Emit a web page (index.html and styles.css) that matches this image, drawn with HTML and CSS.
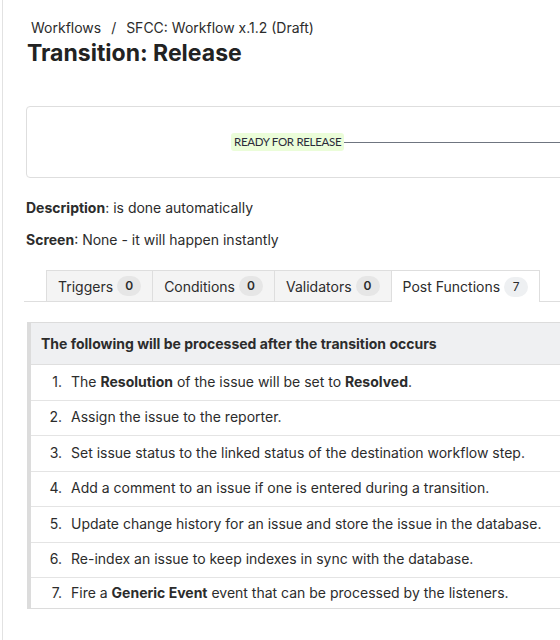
FILE: index.html
```html
<!DOCTYPE html>
<html lang="en">
<head>
  <meta charset="UTF-8">
  <meta name="viewport" content="width=device-width, initial-scale=1.0">
  <title>Transition: Release</title>
  <link rel="stylesheet" href="styles.css">
</head>
<body>
  <div class="page">
    <div class="breadcrumb">
      <a href="#">Workflows</a>
      <span class="sep">/</span>
      <a href="#">SFCC: Workflow x.1.2 (Draft)</a>
    </div>
    <h1>Transition: Release</h1>

    <div class="diagram">
      <span class="status">READY FOR RELEASE</span>
      <span class="arrow"></span>
    </div>

    <p class="meta"><b>Description</b>: is done automatically</p>
    <p class="meta"><b>Screen</b>: None - it will happen instantly</p>

    <div class="tabs">
      <div class="tab">Triggers <span class="count">0</span></div>
      <div class="tab">Conditions <span class="count">0</span></div>
      <div class="tab">Validators <span class="count">0</span></div>
      <div class="tab active">Post Functions <span class="count">7</span></div>
    </div>

    <div class="functions">
      <div class="functions-head">The following will be processed after the transition occurs</div>
      <ol class="function-list">
        <li><span class="num">1.</span><span>The <b>Resolution</b> of the issue will be set to <b>Resolved</b>.</span></li>
        <li><span class="num">2.</span><span>Assign the issue to the reporter.</span></li>
        <li><span class="num">3.</span><span>Set issue status to the linked status of the destination workflow step.</span></li>
        <li><span class="num">4.</span><span>Add a comment to an issue if one is entered during a transition.</span></li>
        <li><span class="num">5.</span><span>Update change history for an issue and store the issue in the database.</span></li>
        <li><span class="num">6.</span><span>Re-index an issue to keep indexes in sync with the database.</span></li>
        <li><span class="num">7.</span><span>Fire a <b>Generic Event</b> event that can be processed by the listeners.</span></li>
      </ol>
    </div>
  </div>
</body>
</html>
```

FILE: styles.css
```css
html, body {
  margin: 0;
  overflow-x: hidden;
}
body {
  font-family: Inter, "Liberation Sans", sans-serif;
  font-size: 14px;
  color: #2c2c2c;
  background: #fff;
}
.page {
  margin-left: 2px;
  border-left: 1px solid #e2e2e2;
  min-height: 640px;
  width: 620px;
  padding: 18px 0 0 23px;
  box-sizing: border-box;
}
.breadcrumb {
  padding-left: 5px;
  font-size: 14px;
  line-height: 20px;
}
.breadcrumb a {
  color: #2c2c2c;
  text-decoration: none;
}
.breadcrumb .sep {
  margin: 0 6px;
}
h1 {
  margin: 0 0 0 1px;
  font-size: 23px;
  line-height: 30px;
  font-weight: 700;
  color: #222;
}
.diagram {
  margin: 38px 0 0 0;
  height: 70px;
  border: 1px solid #dedede;
  border-radius: 4px;
  display: flex;
  align-items: center;
  padding-left: 204px;
}
.status {
  background: #ebfdd9;
  color: #2a2a3a;
  font-family: Lato, sans-serif;
  font-size: 11.5px;
  letter-spacing: -0.3px;
  line-height: 18px;
  padding: 0 3px;
  border-radius: 3px;
}
.arrow {
  flex: 1;
  height: 1px;
  background: #6f7580;
}
.meta {
  margin: 0;
  line-height: 20px;
}
.meta:first-of-type {
  margin-top: 20px;
}
.meta + .meta {
  margin-top: 12px;
}
.tabs {
  margin: 20px 0 0 -2px;
  padding-left: 22px;
  display: flex;
  border-bottom: 1px solid #dedede;
}
.tab {
  display: flex;
  align-items: center;
  gap: 4px;
  height: 30px;
  padding: 0 11px;
  background: #f4f4f4;
  border: 1px solid #dedede;
  border-bottom: none;
  border-right: none;
  color: #2c2c2c;
}
.tab.active {
  background: #fff;
  border-right: 1px solid #dedede;
  margin-bottom: -1px;
  height: 31px;
}
.count {
  display: inline-block;
  min-width: 24px;
  height: 20px;
  line-height: 20px;
  text-align: center;
  border-radius: 10px;
  background: #e6e6e6;
  font-size: 12px;
  font-weight: 600;
}
.tab.active .count {
  background: #eef0f2;
  font-weight: 400;
}
.functions {
  margin: 20px 0 0 1px;
  border-left: 4px solid #dcdcdc;
  border-bottom: 1px solid #dcdcdc;
  border-top: 1px solid #dcdcdc;
}
.functions-head {
  background: #eff0f2;
  font-weight: 700;
  height: 41px;
  line-height: 41px;
  padding-left: 10px;
  border-bottom: 1px solid #dfdfdf;
}
.function-list {
  list-style: none;
  margin: 0;
  padding: 0;
}
.function-list li {
  display: flex;
  gap: 9px;
  height: 32.5px;
  padding-bottom: 2px;
  align-items: center;
  border-bottom: 1px solid #e4e4e4;
}
.function-list li:last-child {
  border-bottom: none;
  height: 28px;
}
.num {
  width: 31px;
  text-align: right;
}
```
